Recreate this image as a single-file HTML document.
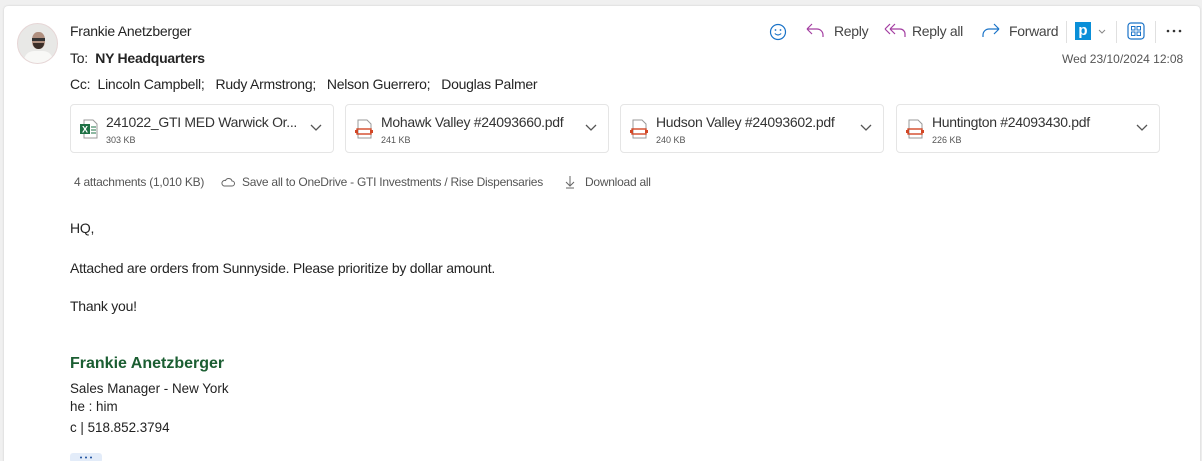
<!DOCTYPE html>
<html><head><meta charset="utf-8"><style>
*{margin:0;padding:0;box-sizing:border-box}
html,body{width:1202px;height:461px;overflow:hidden}
body{background:#f0f0f0;font-family:"Segoe UI","Liberation Sans",sans-serif;color:#242424;position:relative}
.card{position:absolute;left:4px;top:6px;width:1196px;height:460px;background:#fff;border-radius:4px;box-shadow:0 0 2px rgba(0,0,0,.15)}
.a{position:absolute;white-space:nowrap}
.t{letter-spacing:-0.25px}
.av{position:absolute;left:17px;top:23px;width:41px;height:41px;border-radius:50%;background:#e8e8e6;border:1px solid #e6d6d6;overflow:hidden}
.att{position:absolute;top:104px;width:264px;height:49px;border:1px solid #e5e5e5;border-radius:4px}
.att .n{position:absolute;left:35px;top:9px;font-size:14px;color:#333;letter-spacing:-0.3px}
.att .s{position:absolute;left:35px;top:30px;font-size:9px;color:#555}
.att .c{position:absolute;right:10px;top:15px}
.att .ic{position:absolute;left:9px;top:14px}
.btn{font-size:14px;color:#444;top:23px;letter-spacing:-0.3px}
.sig{font:13.4px 'Liberation Sans',sans-serif;color:#222}
</style></head><body>
<div class="card"></div>
<div class="av"><div style="position:absolute;left:14px;top:8px;width:13px;height:17px;border-radius:45%;background:#b09080"></div><div style="position:absolute;left:14px;top:14px;width:13px;height:3px;background:#333"></div><div style="position:absolute;left:15px;top:19px;width:11px;height:6px;border-radius:0 0 6px 6px;background:#3a2e28"></div><div style="position:absolute;left:6px;top:27px;width:29px;height:20px;border-radius:10px 10px 0 0;background:#f8f8f6"></div></div>
<div class="a t" style="left:70px;top:23px;font-size:14px">Frankie Anetzberger</div>
<div class="a t" style="left:70px;top:50px;font-size:14px">To:&nbsp; <b style="font-weight:600">NY Headquarters</b></div>
<div class="a t" style="left:70px;top:76px;font-size:14px">Cc:&nbsp; Lincoln Campbell;&nbsp;&nbsp; Rudy Armstrong;&nbsp;&nbsp; Nelson Guerrero;&nbsp;&nbsp; Douglas Palmer</div>

<svg class="a" style="left:768px;top:22px" width="20" height="20" viewBox="0 0 20 20"><circle cx="10" cy="10" r="7.5" fill="none" stroke="#1a73c8" stroke-width="1.2"/><circle cx="7.5" cy="8" r=".9" fill="#1a73c8"/><circle cx="12.5" cy="8" r=".9" fill="#1a73c8"/><path d="M6.8 11.5q3.2 3 6.4 0" fill="none" stroke="#1a73c8" stroke-width="1.1"/></svg>
<svg class="a" style="left:805px;top:23px" width="20" height="18" viewBox="0 0 20 18"><path d="M2 6h10a6 6 0 0 1 6 6v2M2 6l5-5M2 6l5 5" fill="none" stroke="#a33ea1" stroke-width="1.2"/></svg>
<div class="a btn" style="left:834px">Reply</div>
<svg class="a" style="left:884px;top:23px" width="22" height="18" viewBox="0 0 22 18"><path d="M6 6h10a5 5 0 0 1 5 5v3M6 6l5-5M6 6l5 5M1 6l5-5M1 6l5 5" fill="none" stroke="#a33ea1" stroke-width="1.2"/></svg>
<div class="a btn" style="left:912px">Reply all</div>
<svg class="a" style="left:981px;top:23px" width="20" height="18" viewBox="0 0 20 18"><path d="M18 6H8a6 6 0 0 0-6 6v2M18 6l-5-5M18 6l-5 5" fill="none" stroke="#1a73c8" stroke-width="1.2"/></svg>
<div class="a btn" style="left:1009px">Forward</div>
<div class="a" style="left:1066px;top:21px;width:1px;height:22px;background:#e0e0e0"></div>
<div class="a" style="left:1075px;top:22px;width:16px;height:18px;background:#0a8fd8;color:#fff;font:bold 15px 'Liberation Sans';text-align:center;line-height:18px">p</div>
<svg class="a" style="left:1098px;top:29px" width="8" height="6"><path d="M1 1l3 3 3-3" fill="none" stroke="#888"/></svg>
<div class="a" style="left:1116px;top:21px;width:1px;height:22px;background:#e0e0e0"></div>
<svg class="a" style="left:1127px;top:22px" width="18" height="18" viewBox="0 0 18 18"><rect x="1" y="1" width="16" height="16" rx="3" fill="none" stroke="#1a73c8" stroke-width="1.2"/><rect x="4.5" y="4.5" width="3.5" height="3.5" fill="none" stroke="#1a73c8"/><rect x="10" y="4.5" width="3.5" height="3.5" fill="none" stroke="#1a73c8"/><rect x="4.5" y="10" width="3.5" height="3.5" fill="none" stroke="#1a73c8"/><rect x="10" y="10" width="3.5" height="3.5" fill="none" stroke="#1a73c8"/></svg>
<div class="a" style="left:1155px;top:21px;width:1px;height:22px;background:#e0e0e0"></div>
<svg class="a" style="left:1166px;top:29px" width="16" height="4"><circle cx="2" cy="2" r="1.3" fill="#333"/><circle cx="8" cy="2" r="1.3" fill="#333"/><circle cx="14" cy="2" r="1.3" fill="#333"/></svg>
<div class="a" style="left:1062px;top:52px;font-size:12px;color:#555">Wed 23/10/2024 12:08</div>

<div class="att" style="left:70px"><svg class="ic" width="18" height="20" viewBox="0 0 18 20"><path d="M4 1h9l4 4v14H4z" fill="#fff" stroke="#999"/><rect x="0" y="5" width="10" height="10" fill="#1d7044"/><text x="2" y="13.5" font-size="9" fill="#fff" font-family="Liberation Sans" font-weight="bold">X</text><path d="M11 8h5M11 11h5M11 14h5" stroke="#1d7044" stroke-width="1"/></svg><div class="n">241022_GTI MED Warwick Or...</div><div class="s">303 KB</div><svg class="c" width="14" height="14"><path d="M2 5l5 5 5-5" fill="none" stroke="#555" stroke-width="1.3"/></svg></div>
<div class="att" style="left:345px"><svg class="ic" width="18" height="20" viewBox="0 0 18 20"><path d="M3 1h9l4 4v14H3z" fill="#fff" stroke="#999"/><rect x="2" y="10" width="14" height="5" fill="none" stroke="#d24726" stroke-width="1.4"/><rect x="0" y="11" width="3" height="3" fill="#d24726"/><rect x="15" y="11" width="3" height="3" fill="#d24726"/></svg><div class="n">Mohawk Valley #24093660.pdf</div><div class="s">241 KB</div><svg class="c" width="14" height="14"><path d="M2 5l5 5 5-5" fill="none" stroke="#555" stroke-width="1.3"/></svg></div>
<div class="att" style="left:620px"><svg class="ic" width="18" height="20" viewBox="0 0 18 20"><path d="M3 1h9l4 4v14H3z" fill="#fff" stroke="#999"/><rect x="2" y="10" width="14" height="5" fill="none" stroke="#d24726" stroke-width="1.4"/><rect x="0" y="11" width="3" height="3" fill="#d24726"/><rect x="15" y="11" width="3" height="3" fill="#d24726"/></svg><div class="n">Hudson Valley #24093602.pdf</div><div class="s">240 KB</div><svg class="c" width="14" height="14"><path d="M2 5l5 5 5-5" fill="none" stroke="#555" stroke-width="1.3"/></svg></div>
<div class="att" style="left:896px"><svg class="ic" width="18" height="20" viewBox="0 0 18 20"><path d="M3 1h9l4 4v14H3z" fill="#fff" stroke="#999"/><rect x="2" y="10" width="14" height="5" fill="none" stroke="#d24726" stroke-width="1.4"/><rect x="0" y="11" width="3" height="3" fill="#d24726"/><rect x="15" y="11" width="3" height="3" fill="#d24726"/></svg><div class="n">Huntington #24093430.pdf</div><div class="s">226 KB</div><svg class="c" width="14" height="14"><path d="M2 5l5 5 5-5" fill="none" stroke="#555" stroke-width="1.3"/></svg></div>

<div class="a t" style="left:74px;top:175px;font-size:12px;color:#555">4 attachments (1,010 KB)</div>
<svg class="a" style="left:221px;top:177px" width="14" height="10" viewBox="0 0 14 10"><path d="M3 9h8a2.5 2.5 0 0 0 0-5 3.5 3.5 0 0 0-6.5-.5A2.7 2.7 0 0 0 3 9z" fill="none" stroke="#666"/></svg>
<div class="a t" style="left:242px;top:175px;font-size:12px;color:#555">Save all to OneDrive - GTI Investments / Rise Dispensaries</div>
<svg class="a" style="left:565px;top:175px" width="10" height="14" viewBox="0 0 10 14"><path d="M5 1v10M1 7l4 4 4-4M1 13h8" fill="none" stroke="#666"/></svg>
<div class="a t" style="left:585px;top:175px;font-size:12px;color:#555">Download all</div>

<div class="a t" style="left:70px;top:220px;font-size:14px">HQ,</div>
<div class="a t" style="left:70px;top:260px;font-size:14px">Attached are orders from Sunnyside. Please prioritize by dollar amount.</div>
<div class="a t" style="left:70px;top:298px;font-size:14px">Thank you!</div>
<div class="a" style="left:70px;top:355px;font:bold 16px 'Liberation Sans',sans-serif;color:#1b5e32">Frankie Anetzberger</div>
<div class="a sig" style="left:70px;top:381px">Sales Manager - New York</div>
<div class="a sig" style="left:70px;top:399px">he : him</div>
<div class="a sig" style="left:70px;top:420px">c | 518.852.3794</div>
<div class="a" style="left:70px;top:453px;width:32px;height:10px;background:#e3ecf9;border-radius:3px"><svg style="position:absolute;left:9px;top:3px" width="14" height="3"><circle cx="2" cy="1.5" r="1" fill="#1a4f9c"/><circle cx="7" cy="1.5" r="1" fill="#1a4f9c"/><circle cx="12" cy="1.5" r="1" fill="#1a4f9c"/></svg></div>
</body></html>
